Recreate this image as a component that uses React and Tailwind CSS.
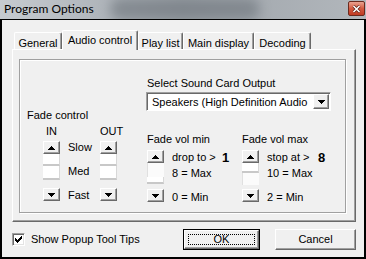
import React from 'react';

const raised =
  'bg-[#f0f0f0] border border-t-white border-l-white border-r-[#696969] border-b-[#696969] shadow-[inset_-1px_-1px_0_#a0a0a0]';

function Arrow({ down }) {
  const rows = [
    [3, 1],
    [2, 3],
    [1, 5],
    [0, 7],
  ];
  return (
    <svg width="7" height="4" viewBox="0 0 7 4" shapeRendering="crispEdges">
      {rows.map(([x, w], i) => (
        <rect key={i} x={x} y={down ? 3 - i : i} width={w} height="1" fill="#000" />
      ))}
    </svg>
  );
}

function ArrowBtn({ down }) {
  return (
    <div className={`h-[13px] flex items-center justify-center ${raised}`}>
      <Arrow down={down} />
    </div>
  );
}

function Scroller({ className, parts }) {
  return (
    <div className={`w-[17px] flex flex-col ${className}`}>
      <ArrowBtn />
      {parts.map((p, i) =>
        p.thumb ? (
          <div key={i} className={`${p.h} bg-white border-b-2 border-b-[#c8c8c8] border-r border-r-[#d8d8d8]`} />
        ) : (
          <div key={i} className={`${p.h} bg-[#fbfbfb] border-l border-l-[#e0e0e0]`} />
        )
      )}
      <div className="flex-1" />
      <ArrowBtn down />
    </div>
  );
}

function Tab({ label, width, selected }) {
  return (
    <div
      className={`${width} ${
        selected ? 'h-[20px] -mb-px relative z-10 pt-[3px]' : 'h-[17px] pt-[4px]'
      } bg-[#f0f0f0] border-t border-l border-t-white border-l-white border-r border-r-[#696969] shadow-[inset_-1px_0_0_#a0a0a0] rounded-t-[2px] text-center whitespace-nowrap`}
    >
      {label}
    </div>
  );
}

export default function App() {
  return (
    <div className="w-[366px] h-[259px] flex flex-col overflow-hidden font-['Liberation_Sans',Arial,sans-serif] text-[11px] leading-[13px] text-black">
      {/* title bar */}
      <div className="relative h-[19px] flex items-start justify-between bg-gradient-to-r from-[#c6cbd0] via-[#9ea4aa] to-[#b2b7bc] overflow-hidden">
        <div className="absolute left-[110px] top-[-2px] w-[150px] h-[22px] rounded-full bg-[#6c737a] blur-[6px] opacity-60" />
        <div className="relative pl-[4px] pt-[1px] font-['Lato',sans-serif] text-[12px] leading-[16px] text-black">
          Program Options
        </div>
        <div className="relative mt-[1px] mr-[1px] w-[17px] h-[15px] rounded-[2px] border border-[#6b2a1e] bg-gradient-to-b from-[#e9a290] via-[#d45a40] to-[#c03a22] flex items-center justify-center">
          <svg width="9" height="8" viewBox="0 0 9 8">
            <path d="M1.5 1 L7.5 7 M7.5 1 L1.5 7" stroke="#5a1d12" strokeWidth="3" />
            <path d="M1.5 1 L7.5 7 M7.5 1 L1.5 7" stroke="#fff" strokeWidth="1.6" />
          </svg>
        </div>
      </div>

      {/* window body */}
      <div className="flex-1 bg-[#f0f0f0] border-t border-x-2 border-b-2 border-black flex flex-col">
        {/* tabs */}
        <div className="mt-[10px] ml-[12px] flex items-end h-[19px]">
          <Tab label="General" width="w-[48px]" />
          <Tab label="Audio control" width="w-[76px]" selected />
          <Tab label="Play list" width="w-[45px]" />
          <Tab label="Main display" width="w-[71px]" />
          <Tab label="Decoding" width="w-[57px]" />
        </div>

        {/* tab panel */}
        <div className="ml-[10px] w-[344px] h-[173px] bg-[#f0f0f0] border-t border-l border-white border-r border-b border-r-[#696969] border-b-[#696969] shadow-[inset_-1px_-1px_0_#a0a0a0]">
          <div className="ml-[6px] mt-[9px] w-[327px] h-[154px] border border-[#a0a0a0] shadow-[inset_1px_1px_0_#fff,1px_1px_0_#fff] flex items-start">
            {/* fade control */}
            <div className="ml-[7px] w-[119px] mt-[49px]">
              <div>Fade control</div>
              <div className="mt-[3px] flex">
                <div className="ml-[16px] w-[17px] text-center">IN</div>
                <div className="w-[40px]" />
                <div className="w-[17px] text-center">OUT</div>
              </div>
              <div className="mt-[3px] flex">
                <Scroller
                  className="ml-[16px] h-[60px]"
                  parts={[
                    { h: 'h-[12px]', thumb: true },
                    { h: 'h-[14px]', thumb: true },
                  ]}
                />
                <div className="w-[40px] pl-[8px] flex flex-col gap-[11px]">
                  <div>Slow</div>
                  <div>Med</div>
                  <div>Fast</div>
                </div>
                <Scroller
                  className="h-[60px]"
                  parts={[
                    { h: 'h-[12px]', thumb: true },
                    { h: 'h-[14px]', thumb: true },
                  ]}
                />
              </div>
            </div>

            {/* sound card + volume */}
            <div className="mt-[17px]">
              <div className="pl-[1px]">Select Sound Card Output</div>
              <div className="mt-[2px] w-[185px] h-[19px] bg-white border border-t-[#a0a0a0] border-l-[#a0a0a0] border-b-white border-r-white shadow-[inset_1px_1px_0_#696969] flex items-center pl-[5px] pr-[1px]">
                <span className="flex-1 pt-[1px]">Speakers (High Definition Audio</span>
                <div className={`w-[16px] h-[15px] flex items-center justify-center ${raised}`}>
                  <Arrow down />
                </div>
              </div>

              <div className="mt-[22px] flex">
                <div className="w-[96px] pl-[1px]">
                  <div>Fade vol min</div>
                  <div className="mt-[4px] flex">
                    <Scroller
                      className="h-[52px]"
                      parts={[
                        { h: 'h-[14px]', thumb: false },
                        { h: 'h-[7px]', thumb: true },
                      ]}
                    />
                    <div className="pl-[8px] pt-px">
                      <div className="flex items-center">
                        <span className="w-[50px]">drop to &gt;</span>
                        <span className="text-[13px] font-bold">1</span>
                      </div>
                      <div className="mt-[3px]">8 = Max</div>
                      <div className="mt-[11px]">0 = Min</div>
                    </div>
                  </div>
                </div>
                <div>
                  <div>Fade vol max</div>
                  <div className="mt-[4px] flex">
                    <Scroller
                      className="h-[52px]"
                      parts={[
                        { h: 'h-[10px]', thumb: true },
                        { h: 'h-[12px]', thumb: false },
                      ]}
                    />
                    <div className="pl-[8px] pt-px">
                      <div className="flex items-center">
                        <span className="w-[51px]">stop at &gt;</span>
                        <span className="text-[13px] font-bold">8</span>
                      </div>
                      <div className="mt-[3px]">10 = Max</div>
                      <div className="mt-[11px]">2 = Min</div>
                    </div>
                  </div>
                </div>
              </div>
            </div>
          </div>
        </div>

        {/* bottom row */}
        <div className="mt-[7px] h-[21px] flex items-center pl-[10px] pr-[8px]">
          <div className="w-[13px] h-[13px] bg-white border border-t-[#a0a0a0] border-l-[#a0a0a0] border-b-white border-r-white shadow-[inset_1px_1px_0_#696969,inset_-1px_-1px_0_#e3e3e3] flex items-center justify-center">
            <svg width="7" height="7" viewBox="0 0 7 7" shapeRendering="crispEdges">
              <path d="M0 2h1v1h1v1h1v-1h1v-1h1v-1h1v-1h1v3h-1v1h-1v1h-1v1h-1v1h-1v-1h-1v-1h-1z" fill="#000" />
            </svg>
          </div>
          <span className="ml-[6px]">Show Popup Tool Tips</span>
          <div className="ml-auto w-[77px] h-[21px] border border-black">
            <div className={`h-full ${raised} p-[3px]`}>
              <div className="h-full border border-dotted border-black flex items-center justify-center">OK</div>
            </div>
          </div>
          <div className={`ml-[15px] w-[81px] h-[21px] flex items-center justify-center ${raised}`}>Cancel</div>
        </div>
      </div>
    </div>
  );
}
